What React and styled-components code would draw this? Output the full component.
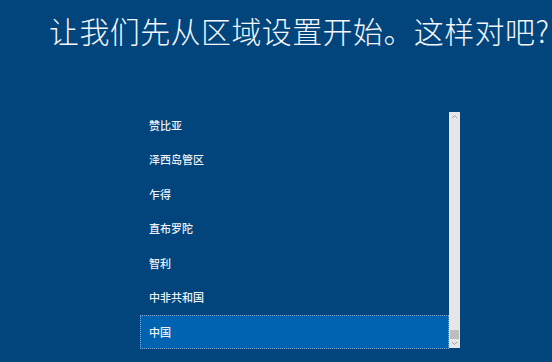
import React from "react";
import styled, { createGlobalStyle } from "styled-components";

const Global = createGlobalStyle`
  html, body { margin: 0; padding: 0; }
  body {
    background: #01457c;
    width: 552px;
    height: 362px;
    overflow: hidden;
    font-family: "Noto Sans CJK SC", "Noto Sans", sans-serif;
  }
`;

const Page = styled.div`
  display: flex;
  flex-direction: column;
  width: 552px;
  height: 362px;
  background: #01457c;
  overflow: hidden;
`;

const Title = styled.h1`
  margin: 15px 0 0 49px;
  font-size: 30px;
  line-height: 30px;
  font-weight: 300;
  color: #f4f6f9;
  white-space: nowrap;
  letter-spacing: 0.4px;
`;

const ListBox = styled.div`
  display: flex;
  margin: 67px 0 0 140px;
  width: 320px;
  height: 237px;
`;

const Viewport = styled.div`
  flex: 1;
  overflow: hidden;
`;

const Rows = styled.ul`
  list-style: none;
  margin: -4.5px 0 0 0;
  padding: 0;
`;

const Row = styled.li`
  box-sizing: border-box;
  height: 34.5px;
  display: flex;
  align-items: center;
  padding-left: 8px;
  font-size: 11px;
  font-weight: 500;
  color: #eef2f7;
  background: ${(p) => (p.$selected ? "#0063b1" : "transparent")};
  border: 1px dotted ${(p) => (p.$selected ? "#7ea6d4" : "transparent")};
`;

const Scrollbar = styled.div`
  width: 11px;
  height: 236px;
  background: #e6e6e6;
  display: flex;
  flex-direction: column;
`;

const Arrow = styled.div`
  height: 9px;
  display: flex;
  align-items: center;
  justify-content: center;
`;

const Track = styled.div`
  flex: 1;
  display: flex;
  flex-direction: column;
  justify-content: flex-end;
  padding: 0 1px;
`;

const Thumb = styled.div`
  height: 9px;
  background: #bdbdbd;
`;

const Chevron = ({ down }) => (
  <svg width="7" height="5" viewBox="0 0 7 5">
    <path
      d={down ? "M1 1 L3.5 3.5 L6 1" : "M1 4 L3.5 1.5 L6 4"}
      fill="none"
      stroke="#a0a0a0"
      strokeWidth="1"
    />
  </svg>
);

const items = ["赞比亚", "泽西岛管区", "乍得", "直布罗陀", "智利", "中非共和国", "中国"];

export default function App() {
  return (
    <Page>
      <Global />
      <Title>让我们先从区域设置开始。这样对吧?</Title>
      <ListBox>
        <Viewport>
          <Rows>
            {items.map((t) => (
              <Row key={t} $selected={t === "中国"}>
                {t}
              </Row>
            ))}
          </Rows>
        </Viewport>
        <Scrollbar>
          <Arrow>
            <Chevron />
          </Arrow>
          <Track>
            <Thumb />
          </Track>
          <Arrow>
            <Chevron down />
          </Arrow>
        </Scrollbar>
      </ListBox>
    </Page>
  );
}
